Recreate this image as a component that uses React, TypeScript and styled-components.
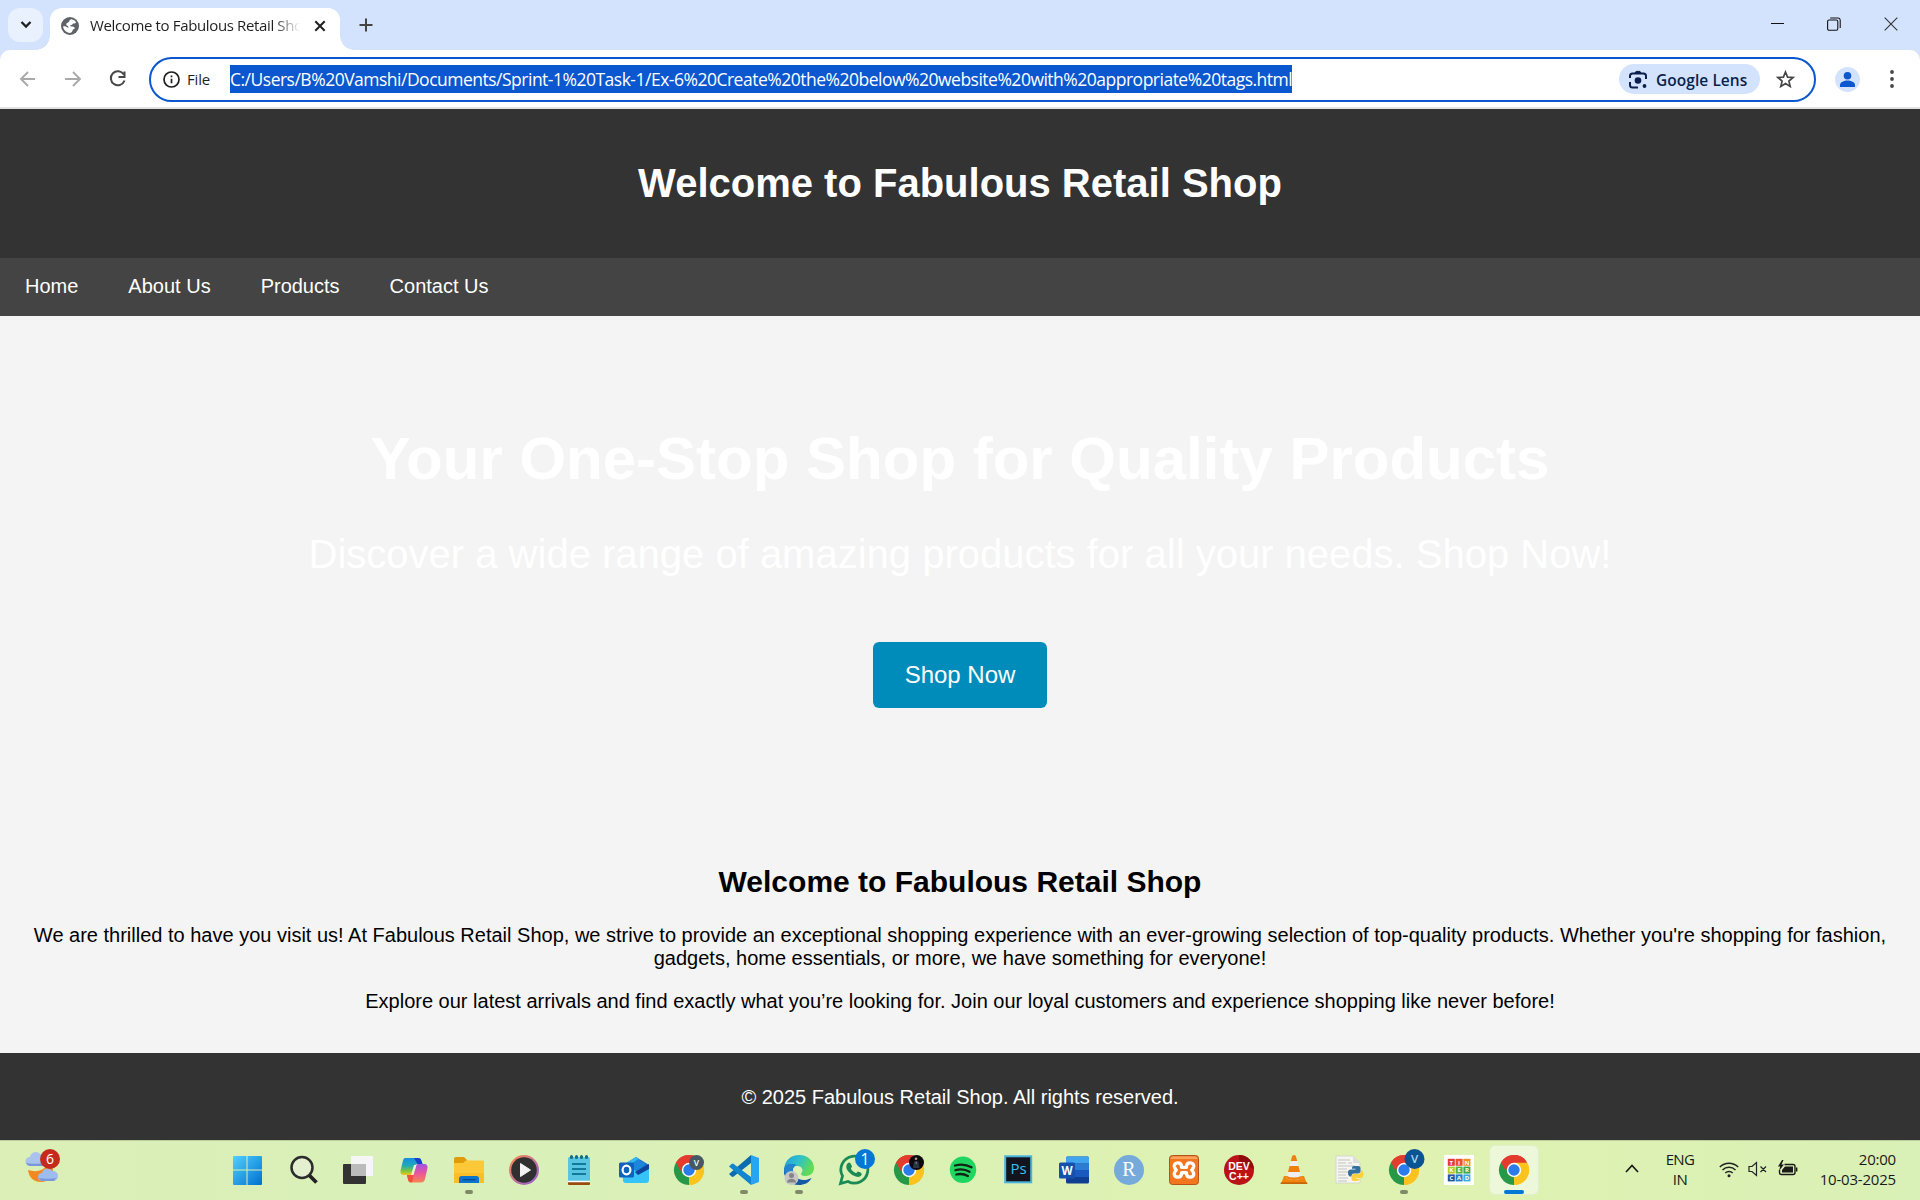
import React from "react";
import styled, { createGlobalStyle, css } from "styled-components";

const uiFont = `"Open Sans", "Noto Sans", sans-serif`;

const Global = createGlobalStyle`
  html, body { margin: 0; padding: 0; }
  body { width: 1920px; height: 1200px; overflow: hidden; background: #f4f4f4; font-family: "Liberation Sans", Arial, sans-serif; }
  * { box-sizing: border-box; }
  svg { display: block; flex: none; }
`;

const Screen = styled.div`
  width: 1920px;
  height: 1200px;
  display: flex;
  flex-direction: column;
`;

/* ---------- Browser chrome ---------- */

const Chrome = styled.div`
  height: 109px;
  flex: none;
  background: #d3e3fd;
  font-family: ${uiFont};
`;

const TabStrip = styled.div`
  height: 50px;
  display: flex;
  align-items: flex-start;
  padding: 8px 22px 0 8px;
`;

const TabSearch = styled.div`
  width: 35px;
  height: 34px;
  border-radius: 12px;
  background: #e9f1fe;
  display: flex;
  align-items: center;
  justify-content: center;
  margin-right: 7px;
`;

const Tab = styled.div`
  position: relative;
  width: 290px;
  height: 42px;
  background: #fff;
  border-radius: 12px 12px 0 0;
  display: flex;
  align-items: center;
  padding: 0 0 7px 11px;
  &::before,
  &::after {
    content: "";
    position: absolute;
    bottom: 0;
    width: 14px;
    height: 14px;
  }
  &::before {
    left: -14px;
    background: radial-gradient(circle at 0 0, transparent 13.5px, #fff 14px);
  }
  &::after {
    right: -14px;
    background: radial-gradient(circle at 100% 0, transparent 13.5px, #fff 14px);
  }
`;

const TabTitle = styled.div`
  margin: 0 10px 0 11px;
  flex: none;
  width: 210px;
  height: 24px;
  line-height: 23px;
  overflow: hidden;
  white-space: nowrap;
  font-size: 15px;
  letter-spacing: -0.36px;
  color: #1f1f1f;
  mask-image: linear-gradient(90deg, #000 184px, transparent 210px);
`;

const NewTab = styled.div`
  margin: 10px 0 0 19px;
`;

const WindowControls = styled.div`
  margin-left: auto;
  display: flex;
  gap: 43px;
  padding-top: 9px;
`;

const Toolbar = styled.div`
  height: 59px;
  background: #fff;
  border-radius: 10px 10px 0 0;
  border-bottom: 2px solid #e0e3e1;
  display: flex;
  align-items: center;
  padding: 1px 21px 0 16px;
`;

const NavButtons = styled.div`
  display: flex;
  gap: 21px;
  margin-right: 19px;
`;

const Omnibox = styled.div`
  width: 1667px;
  height: 45px;
  flex: none;
  border: 2.5px solid #0b57d0;
  border-radius: 23px;
  display: flex;
  align-items: center;
  padding: 0 19px 0 12px;
`;

const Scheme = styled.span`
  margin-left: 7px;
  width: 43px;
  font-size: 15px;
  letter-spacing: -0.2px;
  font-weight: 500;
  color: #1f1f1f;
`;

const Url = styled.span`
  height: 28px;
  line-height: 28px;
  width: 1062px;
  white-space: nowrap;
  background: #0b57d0;
  color: #fff;
  font-size: 17.5px;
  letter-spacing: -0.5px;
`;

const LensChip = styled.div`
  margin-left: auto;
  width: 141px;
  height: 30px;
  border-radius: 15px;
  background: #d3e3fd;
  display: flex;
  align-items: center;
  padding: 1px 0 0 9px;
  gap: 8px;
  font-size: 15.5px;
  letter-spacing: 0.05px;
  font-weight: 600;
  color: #0a1f4d;
  white-space: nowrap;
  margin-right: 16px;
`;

const Avatar = styled.div`
  margin-left: 19px;
  margin-right: 30px;
`;

/* ---------- Web page ---------- */

const PageHeader = styled.header`
  height: 149px;
  flex: none;
  background: #333;
  color: #fff;
  display: flex;
  align-items: center;
  justify-content: center;
  padding-bottom: 2px;
  h1 { margin: 0; font-size: 40px; line-height: 46px; }
`;

const PageNav = styled.nav`
  height: 58px;
  flex: none;
  background: #444;
  display: flex;
  align-items: center;
  padding: 0 0 2px 25px;
  gap: 50px;
`;

const NavLink = styled.a`
  color: #fff;
  font-size: 20px;
  line-height: 23px;
`;

const Hero = styled.section`
  height: 517px;
  flex: none;
  background: #f4f4f4;
  color: #fff;
  display: flex;
  flex-direction: column;
  align-items: center;
  padding-top: 108px;
  h2 { margin: 0; font-size: 60px; line-height: 69px; }
  p { margin: 38px 0 65px; font-size: 40px; line-height: 46px; }
`;

const ShopButton = styled.a`
  width: 174px;
  height: 66px;
  background: #008cba;
  border-radius: 6px;
  font-size: 24px;
  line-height: 66px;
  text-align: center;
`;

const Intro = styled.section`
  height: 220px;
  flex: none;
  background: #f4f4f4;
  color: #000;
  text-align: center;
  padding: 32px 25px 0;
  h2 { margin: 0 0 25px; font-size: 30px; line-height: 34px; }
  p { margin: 0 0 20px; font-size: 20px; line-height: 23px; }
`;

const PageFooter = styled.footer`
  height: 87px;
  flex: none;
  background: #333;
  color: #fff;
  font-size: 20px;
  line-height: 89px;
  text-align: center;
`;

/* ---------- Taskbar ---------- */

const Taskbar = styled.div`
  height: 60px;
  flex: none;
  border-top: 1px solid #bccd9c;
  background: linear-gradient(90deg, #dbefb6 0%, #d9f0ba 25%, #dcf1b4 50%, #dff2b1 75%, #d9f0b6 100%);
  display: flex;
  font-family: ${uiFont};
  color: #1a1a1a;
`;

const Widgets = styled.div`
  width: 221px;
  padding: 3px 0 0 24px;
`;

const Slot = styled.div<{ $active?: boolean }>`
  width: 48px;
  height: 48px;
  margin: 5px 3.5px 0;
  border-radius: 5px;
  display: flex;
  flex-direction: column;
  align-items: center;
  padding-top: 4px;
  ${(p) => p.$active && css`background: #edf7d9; box-shadow: 0 0 0 1px #e2efcb;`}
`;

const Indicator = styled.div<{ $active?: boolean }>`
  width: ${(p) => (p.$active ? 20 : 8)}px;
  height: 4px;
  border-radius: 2px;
  background: ${(p) => (p.$active ? "#0078d4" : "#7f8a68")};
`;

const Tray = styled.div`
  margin-left: auto;
  display: flex;
  align-items: center;
  padding: 0 24px 3px 0;
  font-size: 15px;
  line-height: 20px;
`;

const Language = styled.div`
  width: 40px;
  margin: 0 19px 0 20px;
  text-align: center;
  letter-spacing: -0.6px;
`;

const TrayIcons = styled.div`
  display: flex;
  align-items: center;
  gap: 9px;
`;

const Clock = styled.div`
  width: 81px;
  margin-left: 16px;
  text-align: right;
  letter-spacing: -0.2px;
`;

/* ---------- Small icons ---------- */

const Stroke = ({ d, w = 20, h = 20, color = "#333", sw = 2 }: { d: string; w?: number; h?: number; color?: string; sw?: number }) => (
  <svg width={w} height={h} viewBox={`0 0 ${w} ${h}`} fill="none" stroke={color} strokeWidth={sw}>
    <path d={d} />
  </svg>
);

const Globe = () => (
  <svg width="18" height="18" viewBox="0 0 18 18">
    <circle cx="9" cy="9" r="9" fill="#5f6368" />
    <path d="M10.500 2.200c2 .4 3.600 1.500 4.600 3.100-.5 1-1.500 1.300-3.100 1.200-.3 1.400-1.500 1.700-3 1.700.1 1 .9 1.200 2.200 1.200 2 0 2.800.9 2.500 2.400-1.500.3-1.900.9-2.200 1.900-.4 1.200-1.200 1.900-2.500 2.200-4-.2-6.700-3-6.900-6.600 1.700-.3 3.400.2 5.300 1.700.3-1.500-.5-2.300-1.800-2.600-.8-1.500 0-2.500 1.500-2.900.5-.1 1-.5 1.100-1.200.2-1 1-1.800 2.300-2.100z" fill="#fff" />
  </svg>
);

const InfoIcon = () => (
  <svg width="17" height="17" viewBox="0 0 17 17" fill="none" stroke="#1f1f1f" strokeWidth="1.700">
    <circle cx="8.500" cy="8.500" r="7.500" />
    <path d="M8.500 7.700v4.500M8.500 4.500v1.800" />
  </svg>
);

const LensIcon = () => (
  <svg width="20" height="20" viewBox="0 0 20 20" fill="none" stroke="#0a1f4d" strokeWidth="2">
    <path d="M2 8V6a2.500 2.500 0 0 1 2.500-2.500h11A2.500 2.500 0 0 1 18 6v3M2 12v3a2.500 2.500 0 0 0 2.500 2.500H10" />
    <path d="M7 3l1-1.600h4L13 3z" fill="#0a1f4d" strokeWidth="1" />
    <circle cx="10" cy="10.500" r="3.300" fill="#0a1f4d" stroke="none" />
    <circle cx="16.500" cy="16" r="1.900" fill="#0a1f4d" stroke="none" />
  </svg>
);

/* ---------- Taskbar icons, drawn on a 30px grid ---------- */

const Art = ({ children }: { children: React.ReactNode }) => (
  <svg width="40" height="40" viewBox="-5 -5 40 40" overflow="visible">{children}</svg>
);

const ChromeLogo = () => (
  <g transform="translate(15 15)">
    <path d="M0 0L-13 -7.500A15 15 0 0 1 13 -7.500z" fill="#e33b2e" />
    <path d="M0 0L13 -7.500A15 15 0 0 1 0 15z" fill="#fcc31e" />
    <path d="M0 0L0 15A15 15 0 0 1 -13 -7.500z" fill="#279847" />
    <path d="M-13 -7.500A15 15 0 0 1 13 -7.500H0A7.500 7.500 0 0 0 -6.700 -3L-8.200 1z" fill="#e33b2e" />
    <path d="M6.300 3.500L0 15A15 15 0 0 0 13.300 -7.200H0z" fill="#fcc31e" />
    <circle r="7.200" fill="#fff" />
    <circle r="5.700" fill="#2b7bea" />
  </g>
);

const WindowsArt = () => (
  <Art>
    <defs>
      <linearGradient id="win" x1="0" y1="0" x2="1" y2="1">
        <stop offset="0" stopColor="#50d0ff" />
        <stop offset="1" stopColor="#0070d0" />
      </linearGradient>
    </defs>
    <path transform="translate(-2 0)" d="M2 1h12.500v13.500h-13.500v-12.500a1 1 0 0 1 1-1zM15.500 1H29a1 1 0 0 1 1 1v12.500H15.500zM1 15.500h13.500V30H2a1 1 0 0 1-1-1zM15.500 15.500H30V29a1 1 0 0 1-1 1H15.500z" fill="url(#win)" />
  </Art>
);

const SearchArt = () => (
  <Art>
    <g transform="translate(-1 0)">
      <circle cx="14" cy="12.500" r="10.500" fill="#e4efd0" stroke="#2c2c2c" strokeWidth="2.500" />
      <path d="M21.500 20.500l7 7" stroke="#222" strokeWidth="3.800" />
    </g>
  </Art>
);

const TaskViewArt = () => (
  <Art>
    <rect x="-1" y="9" width="23" height="20" rx="1" fill="#333" />
    <rect x="7" y="1" width="22" height="20" rx="1" fill="#f6f6f6" />
    <rect x="7" y="9" width="15" height="12" fill="#bbb" />
  </Art>
);

const CopilotArt = () => (
  <Art>
    <defs>
      <linearGradient id="copA" x1="0" y1="0" x2="0" y2="1">
        <stop offset="0" stopColor="#1b8be0" />
        <stop offset="0.450" stopColor="#20a9b8" />
        <stop offset="0.750" stopColor="#7cc242" />
        <stop offset="1" stopColor="#f5c518" />
      </linearGradient>
      <linearGradient id="copB" x1="0" y1="0" x2="0" y2="1">
        <stop offset="0" stopColor="#a153e0" />
        <stop offset="0.500" stopColor="#e9559d" />
        <stop offset="1" stopColor="#f88450" />
      </linearGradient>
    </defs>
    <path d="M6 3h13c2 0 3 1 3.500 3l1 3h-5c-2 0-2.600 1-3 3l-1.500 5c-.7 2-1.700 3-4 3H5c-3 0-4-2-3.300-5L4 5.500C4.500 4 5 3 6 3z" fill="url(#copA)" />
    <path d="M15 3h4c2 0 3 1 3.500 3l1 3h-5z" fill="#1840c8" />
    <path d="M20 9h5c3 0 4 2 3.300 5L26 24c-.5 2-1.500 3.500-4 3.500H12c-2 0-2.600-1-3-3L8 20h3c2 0 3-1 3.600-3L16 12c.6-2 1.500-3 4-3z" fill="url(#copB)" />
    <path d="M8 20h3c2 0 3-1 3.600-3L14 24c-.3 2-1 3.500-2 3.500s-2.600-1-3-3z" fill="#f0503c" />
    <path d="M15 10h2.500l-3 10h-2.500z" fill="#eaf4d0" />
  </Art>
);

const FolderArt = () => (
  <Art>
    <path d="M0 4a2 2 0 0 1 2-2h8l3 3v8H0z" fill="#e09c08" />
    <path d="M0 8h9l3-2.500h17a1 1 0 0 1 1 1V28H0z" fill="#fdc838" />
    <path d="M0 18h30v9a1 1 0 0 1-1 1H1a1 1 0 0 1-1-1z" fill="#fbbd28" />
    <path d="M5 28v-4.500a2.500 2.500 0 0 1 2.500-2.500h15a2.500 2.500 0 0 1 2.500 2.500V28z" fill="#0c74cc" />
    <path d="M8.500 24.700h13" stroke="#064b8b" strokeWidth="1.300" />
  </Art>
);

const MediaArt = () => (
  <Art>
    <defs>
      <linearGradient id="ring" x1="0" y1="0" x2="1" y2="1">
        <stop offset="0" stopColor="#ff8b45" />
        <stop offset="1" stopColor="#8d5de0" />
      </linearGradient>
    </defs>
    <circle cx="15" cy="15" r="15" fill="url(#ring)" />
    <circle cx="15" cy="15" r="12.800" fill="#303030" />
    <path d="M11.500 8.500l10 6.500-10 6.500z" fill="#f3f3f3" stroke="#f3f3f3" strokeLinejoin="round" />
  </Art>
);

const NotepadArt = () => (
  <Art>
    <rect x="4" y="26" width="22" height="4" rx="1" fill="#9b4a10" />
    <rect x="4" y="2" width="22" height="25" rx="1.500" fill="#58c5e3" />
    <path d="M4 26.500h22" stroke="#fff" strokeWidth="1.500" />
    <path d="M8 9h14M8 14h14M8 19h14" stroke="#127a98" strokeWidth="2" />
    <path d="M7.500 1.500v1M12.500 1.500v1M17.500 1.500v1M22.500 1.500v1" stroke="#146c80" strokeWidth="3" strokeLinecap="round" />
  </Art>
);

const OutlookArt = () => (
  <Art>
    <path d="M4 10L17 2l13 8v10H4z" fill="#1668c8" />
    <path d="M4 10L17 2l4 2.400-10 8z" fill="#35b8f1" />
    <path d="M11 10l8-6 8 5-10 8z" fill="#1c86dc" />
    <path d="M4 14h10l6 4 10-7v14a3 3 0 0 1-3 3H7a3 3 0 0 1-3-3z" fill="#36c3f5" />
    <path d="M16 17l14-8v5L19 20z" fill="#0b4499" />
    <rect x="0" y="7.500" width="15" height="15" rx="1.500" fill="#0c63bd" />
    <ellipse cx="7.500" cy="15" rx="3.900" ry="4.300" fill="none" stroke="#fff" strokeWidth="2.200" />
  </Art>
);

const VsCodeArt = () => (
  <Art>
    <path d="M22 0v8L4 22l-1.500-.5L0 19 22 0z" fill="#0b6cb4" />
    <path d="M22 30v-8L4 8.500 2.500 9 0 11.500 22 30z" fill="#1285cf" />
    <path d="M22 0l8 3v24l-8 3z" fill="#27a5f1" />
  </Art>
);

const EdgeArt = () => (
  <Art>
    <defs>
      <linearGradient id="edgeTop" x1="0" y1="0" x2="1" y2="0.400">
        <stop offset="0" stopColor="#249bd8" />
        <stop offset="0.500" stopColor="#2cc0cd" />
        <stop offset="1" stopColor="#62dc52" />
      </linearGradient>
    </defs>
    <path d="M0 14C1 5 7 0 15 0c9 0 15 6 15 13 0 5-4 8-8 8-4 0-6-1.500-4.500-3 2-2 1-7-4-7C9 11 6 13 5.500 17L0 19z" fill="url(#edgeTop)" />
    <path d="M0 14c2-5 7-6 12-4C8 12 8 17 11 21c4 5 11 5 16.500 2C25 28 20 30 15 30 6 30-1 23 0 14z" fill="#1458a8" />
    <path d="M0 14c2-5 7-6 12-4-5 3-4 10-1 14-6-1-11-4-11-10z" fill="#2384cc" />
    <circle cx="7.500" cy="23" r="7" fill="#c7c7c7" />
    <circle cx="7.500" cy="20.500" r="2.500" fill="#858585" />
    <path d="M3 27.500c0-5 9-5 9 0z" fill="#858585" />
  </Art>
);

const WhatsAppArt = () => (
  <Art>
    <path d="M1.500 28.500l2-7.500A13.500 13.500 0 1 1 9 26.500z" fill="none" stroke="#1b8a54" strokeWidth="2.800" />
    <path d="M8.500 8.500c2-2 3-.8 4.500 3-.3 1-1.300 1.500-1 2.200 1 2 2.700 3.500 4.700 4.300.8.200 1.500-1.300 2.300-1.600 3.500 1.300 4.300 1.800 3.300 3.900-1.600 2.400-4.600 2-8 .2-3.500-2-7.300-6-7-9 0-1.200.5-2.200 1.200-3z" fill="#1b8a54" />
    <circle cx="26" cy="4" r="10" fill="#0078d4" />
    <text x="26" y="9.500" textAnchor="middle" fontFamily={uiFont} fontSize="15.500" fill="#fff">1</text>
  </Art>
);

const ChromeVArt = () => (
  <Art>
    <ChromeLogo />
    <circle cx="22.500" cy="7.500" r="7.500" fill="#475862" />
    <text x="22.500" y="10.500" textAnchor="middle" fontFamily={uiFont} fontSize="8.500" fontWeight="600" fill="#fff">V</text>
  </Art>
);

const ChromePhotoArt = () => (
  <Art>
    <ChromeLogo />
    <circle cx="22.500" cy="7.500" r="7.500" fill="#0b0b10" />
    <circle cx="22" cy="3.800" r="1.300" fill="#b59a90" />
    <path d="M19 13l1-6.500h4.500l1 6.500z" fill="#2b3442" />
    <path d="M22.200 6.500v2.500" stroke="#99a" strokeWidth="0.800" />
  </Art>
);

const SpotifyArt = () => (
  <Art>
    <circle cx="14" cy="14.800" r="13.200" fill="#1fd660" />
    <path d="M6 10.500c5.500-1.500 11.500-1 16.500 1.800M6.500 15.200c5-1.300 10-.8 14 1.600M7.300 19.500c4-.9 8-.6 11.600 1.500" fill="none" stroke="#142414" strokeWidth="2.300" strokeLinecap="round" />
  </Art>
);

const PhotoshopArt = () => (
  <Art>
    <rect x="1.200" y="1.300" width="26" height="26" fill="#14141e" stroke="#46b4dd" strokeWidth="2" />
    <text x="14.500" y="18.700" textAnchor="middle" fontFamily={uiFont} fontSize="15" fill="#35c2f3">Ps</text>
  </Art>
);

const WordArt = () => (
  <Art>
    <rect x="7" y="1.500" width="23" height="27" rx="1.500" fill="#103f91" />
    <path d="M7 3a1.500 1.500 0 0 1 1.500-1.500h20A1.500 1.500 0 0 1 30 3v5.500H7z" fill="#41a5ee" />
    <rect x="7" y="8.300" width="23" height="7" fill="#2b7cd3" />
    <rect x="7" y="15.200" width="23" height="6.800" fill="#185abd" />
    <rect x="0" y="7.500" width="16" height="16" rx="1.500" fill="#1650ad" />
    <text x="8" y="19.500" textAnchor="middle" fontFamily={uiFont} fontSize="11.500" fontWeight="700" fill="#fff">W</text>
  </Art>
);

const RArt = () => (
  <Art>
    <circle cx="15" cy="15" r="15" fill="#75aadb" />
    <text x="15" y="21" textAnchor="middle" fontFamily="Liberation Serif, serif" fontSize="20" fill="#fff">R</text>
  </Art>
);

const XamppArt = () => (
  <Art>
    <rect x="0.500" y="0.500" width="29" height="29" rx="3" fill="#f27620" stroke="#b5541a" />
    <path d="M1.500 4a2.500 2.500 0 0 1 2.500-2.500h22A2.500 2.500 0 0 1 28.500 4z" fill="#f8a25d" />
    <path d="M12.500 12.300h5V11c.5-4.500 7.500-4 7.200.2-.2 1.800-1 2.500-2 3.800 1 1.300 1.800 2 2 3.800.3 4.200-6.700 4.700-7.200.2v-1.300h-5V19c-.5 4.500-7.500 4-7.200-.2.2-1.800 1-2.500 2-3.800-1-1.300-1.800-2-2-3.800-.3-4.200 6.700-4.700 7.200-.2z" fill="none" stroke="#fff" strokeWidth="3.300" strokeLinejoin="round" />
  </Art>
);

const DevArt = () => (
  <Art>
    <circle cx="15" cy="15" r="15" fill="#ba1216" />
    <path d="M15 0A15 15 0 0 1 30 14L15 8z" fill="#8e0c10" />
    <g fontFamily={`"Liberation Sans", Arial, sans-serif`} fontSize="10.500" fontWeight="700" fill="#fff" textAnchor="middle">
      <text x="15" y="15">DEV</text>
      <text x="15" y="25">C++</text>
    </g>
  </Art>
);

const VlcArt = () => (
  <Art>
    <path d="M5 21h20l3 8H2z" fill="#f0860d" />
    <path d="M2 27.300h26l.6 1.700H1.400z" fill="#c96405" />
    <path d="M13 1.500a2 1.500 0 0 1 4 0L22.500 23a8 3 0 0 1-15 0z" fill="#eee" />
    <path d="M13 1.500a2 1.500 0 0 1 4 0l1.200 4.500h-6.400zM10.500 11h9l1.500 6H9z" fill="#f0800d" />
    <path d="M8 21l-.5 2a8 3 0 0 0 15 0l-.5-2a8 3 0 0 1-14 0z" fill="#f0800d" />
  </Art>
);

const PythonArt = () => (
  <Art>
    <path d="M2 1h17l7 7v20H2z" fill="#f5f5f2" stroke="#cfd2c8" strokeWidth="0.800" />
    <path d="M4 5h12M4 8h8M14 8h4M4 11h17M4 14h9M4 17h11M4 20h8M4 23h10M4 26h9" stroke="#c3c5c0" strokeWidth="1.200" />
    <path d="M19 1l7 7h-7z" fill="#dedede" />
    <path d="M20 11h4c2 0 2.500 1 2.500 2.500V16c0 1.500-1 2.500-2.500 2.500h-4c-2 0-2.500 1.500-2.500 3h-1c-2 0-2.500-2-2.500-4s1-3 3-3h4.500v-.8H18c0-2 .5-2.700 2-2.700z" fill="#32709f" />
    <path d="M22 26h-2c-1.500 0-2.500-.7-2.500-2v-2.500c0-1.500 1-2.500 2.500-2.500h4.500c2 0 2.500-1.500 2.500-3.500 2 0 2.500 2 2.500 4s-1 3.500-3 3.500H22v.7h3.500c0 1.600-1 2.300-3.500 2.300z" fill="#fccf3c" />
  </Art>
);

const ChromeBadgeArt = () => (
  <Art>
    <ChromeLogo />
    <circle cx="25.500" cy="4" r="10" fill="#0a5493" />
    <text x="25.500" y="8" textAnchor="middle" fontFamily={uiFont} fontSize="11.500" fontWeight="600" fill="#a8d8f5">V</text>
  </Art>
);

const tinker: [string, string][] = [
  ["T", "#e53b3a"], ["I", "#e9512d"], ["N", "#f28a20"],
  ["K", "#b5c92e"], ["E", "#52b848"], ["R", "#3aa84e"],
  ["C", "#20579d"], ["A", "#2282c5"], ["D", "#3aabe0"],
];

const TinkercadArt = () => (
  <Art>
    <rect width="30" height="30" fill="#fff" />
    {tinker.map(([c, fill], i) => {
      const x = 3.800 + (i % 3) * 7.800;
      const y = 3.800 + Math.floor(i / 3) * 7.800;
      return (
        <g key={i}>
          <rect x={x} y={y} width="7" height="7" fill={fill} />
          <text x={x + 3.500} y={y + 5.800} textAnchor="middle" fontFamily={uiFont} fontSize="6" fontWeight="700" fill="#fff">{c}</text>
        </g>
      );
    })}
  </Art>
);

const ActiveChromeArt = () => <Art><ChromeLogo /></Art>;

const apps: { Icon: React.FC; open?: boolean; active?: boolean }[] = [
  { Icon: WindowsArt }, { Icon: SearchArt }, { Icon: TaskViewArt }, { Icon: CopilotArt },
  { Icon: FolderArt, open: true }, { Icon: MediaArt }, { Icon: NotepadArt }, { Icon: OutlookArt },
  { Icon: ChromeVArt }, { Icon: VsCodeArt, open: true }, { Icon: EdgeArt, open: true },
  { Icon: WhatsAppArt }, { Icon: ChromePhotoArt }, { Icon: SpotifyArt }, { Icon: PhotoshopArt },
  { Icon: WordArt }, { Icon: RArt }, { Icon: XamppArt }, { Icon: DevArt }, { Icon: VlcArt },
  { Icon: PythonArt }, { Icon: ChromeBadgeArt, open: true }, { Icon: TinkercadArt },
  { Icon: ActiveChromeArt, open: true, active: true },
];

const WeatherArt = () => (
  <svg width="40" height="42" viewBox="0 0 40 42">
    <path d="M4 26c9 3 19 0 21-9 8 7 3 21-8 21-7 0-12-4-13-12z" fill="#f08a20" />
    <path d="M6 22a4.500 4.500 0 0 1 0-9 6 6 0 0 1 11-2 5 5 0 0 1 3 11z" fill="#a9c2ee" />
    <path d="M18 37a4 4 0 0 1 0-8 5.500 5.500 0 0 1 10-2 5 5 0 0 1 2 10z" fill="#9dbcf0" />
    <path d="M6 22a4.500 4.500 0 0 1-4-3c4 1 14 1 18 0v3zM18 37a4 4 0 0 1-3-3c4 1 13 1 17 0l-2 3z" fill="#7898d8" />
    <circle cx="26" cy="15" r="10" fill="#c42b1c" />
    <text x="26" y="20" textAnchor="middle" fontFamily={uiFont} fontSize="14" fill="#fff">6</text>
  </svg>
);

const BrowserChrome = () => (
  <Chrome>
    <TabStrip>
      <TabSearch><Stroke w={12} h={10} d="M1.500 2l4.500 4.500L10.500 2" color="#1f1f1f" sw={2.300} /></TabSearch>
      <Tab>
        <Globe />
        <TabTitle>Welcome to Fabulous Retail Shop</TabTitle>
        <Stroke w={20} h={20} d="M5.300 5.300l9.400 9.400M14.700 5.300l-9.400 9.400" color="#1f1f1f" />
      </Tab>
      <NewTab><Stroke w={14} h={14} d="M7 .5v13M.5 7h13" color="#444" /></NewTab>
      <WindowControls>
        <Stroke w={13} h={15} d="M0 6.500h13" color="#111" sw={1} />
        <svg width="14" height="14" viewBox="0 0 14 14" fill="none" stroke="#111" strokeWidth="1.100">
          <rect x="0.600" y="3" width="10.200" height="10.200" rx="1.500" />
          <path d="M3.200 1H11a2.200 2.200 0 0 1 2.200 2.200V11" />
        </svg>
        <Stroke w={14} h={14} d="M.7.7l12.600 12.600M13.300.7L.7 13.300" color="#333" sw={1.100} />
      </WindowControls>
    </TabStrip>
    <Toolbar>
      <NavButtons>
        <Stroke w={24} h={24} d="M19 12H5.500M12 5l-7 7 7 7" color="#a9a9a9" sw={1.900} />
        <Stroke w={24} h={24} d="M4 12h14.500M12 5l7 7-7 7" color="#a9a9a9" sw={1.900} />
        <Stroke w={24} h={24} d="M17.800 7.500A7 7 0 1 0 18.500 13.500M18.500 4.500v5.500h-6" color="#474747" />
      </NavButtons>
      <Omnibox>
        <InfoIcon />
        <Scheme>File</Scheme>
        <Url>C:/Users/B%20Vamshi/Documents/Sprint-1%20Task-1/Ex-6%20Create%20the%20below%20website%20with%20appropriate%20tags.html</Url>
        <LensChip><LensIcon />Google Lens</LensChip>
        <Stroke w={19} h={19} d="M9.500 2l2.100 5.100 5.400.4-4.100 3.600 1.300 5.300-4.700-2.900-4.700 2.900 1.300-5.300L2 7.500l5.400-.4z" color="#474747" sw={1.700} />
      </Omnibox>
      <Avatar>
        <svg width="25" height="25" viewBox="0 0 25 25">
          <circle cx="12.500" cy="12.500" r="12.500" fill="#d3e3fd" />
          <circle cx="12.500" cy="8.700" r="3.800" fill="#0b57d0" />
          <path d="M5 20v-2c0-3 4-4.500 7.500-4.500S20 15 20 18v2z" fill="#0b57d0" />
        </svg>
      </Avatar>
      <svg width="4" height="20" viewBox="0 0 4 20" fill="#474747">
        <circle cx="2" cy="3" r="1.900" /><circle cx="2" cy="10" r="1.900" /><circle cx="2" cy="17" r="1.900" />
      </svg>
    </Toolbar>
  </Chrome>
);

export default function App() {
  return (
    <Screen>
      <Global />
      <BrowserChrome />
      <PageHeader><h1>Welcome to Fabulous Retail Shop</h1></PageHeader>
      <PageNav>
        {["Home", "About Us", "Products", "Contact Us"].map((t) => <NavLink key={t}>{t}</NavLink>)}
      </PageNav>
      <Hero>
        <h2>Your One-Stop Shop for Quality Products</h2>
        <p>Discover a wide range of amazing products for all your needs. Shop Now!</p>
        <ShopButton>Shop Now</ShopButton>
      </Hero>
      <Intro>
        <h2>Welcome to Fabulous Retail Shop</h2>
        <p>We are thrilled to have you visit us! At Fabulous Retail Shop, we strive to provide an exceptional shopping experience with an ever-growing selection of top-quality products. Whether you're shopping for fashion, gadgets, home essentials, or more, we have something for everyone!</p>
        <p>Explore our latest arrivals and find exactly what you’re looking for. Join our loyal customers and experience shopping like never before!</p>
      </Intro>
      <PageFooter>© 2025 Fabulous Retail Shop. All rights reserved.</PageFooter>
      <Taskbar>
        <Widgets><WeatherArt /></Widgets>
        {apps.map(({ Icon, open, active }, i) => (
          <Slot key={i} $active={active}>
            <Icon />
            {open && <Indicator $active={active} />}
          </Slot>
        ))}
        <Tray>
          <Stroke w={16} h={12} d="M2 9l6-6.500L14 9" color="#1a1a1a" sw={1.700} />
          <Language>ENG<br />IN</Language>
          <TrayIcons>
            <svg width="20" height="17" viewBox="0 0 20 17" fill="none" stroke="#222" strokeWidth="1.500">
              <path d="M.8 6a13 13 0 0 1 18.400 0M3.500 9a9.300 9.300 0 0 1 13 0M6.300 12a5.300 5.300 0 0 1 7.400 0" />
              <circle cx="10" cy="14.700" r="1.500" fill="#222" stroke="none" />
            </svg>
            <svg width="20" height="16" viewBox="0 0 20 16" fill="none" stroke="#222" strokeWidth="1.200">
              <path d="M1 5.500h3L8.500 1.500v13L4 10.500H1zM12.500 5.500l5.500 5.500M18 5.500L12.500 11" />
            </svg>
            <svg width="22" height="18" viewBox="0 0 22 18" fill="none" stroke="#1a1a1a" strokeWidth="1.400">
              <path d="M7.500 4.500H16a2 2 0 0 1 2 2v6a2 2 0 0 1-2 2H4.500a2 2 0 0 1-2-2V10M19.700 7.500v4" />
              <path d="M8 6.500h8v6H5V10z" fill="#1a1a1a" stroke="none" />
              <path d="M5 0L1 6.500h2.200L2 11l5-6.500H4.500L6.500 0z" fill="#1a1a1a" stroke="none" />
            </svg>
          </TrayIcons>
          <Clock>20:00<br />10-03-2025</Clock>
        </Tray>
      </Taskbar>
    </Screen>
  );
}
